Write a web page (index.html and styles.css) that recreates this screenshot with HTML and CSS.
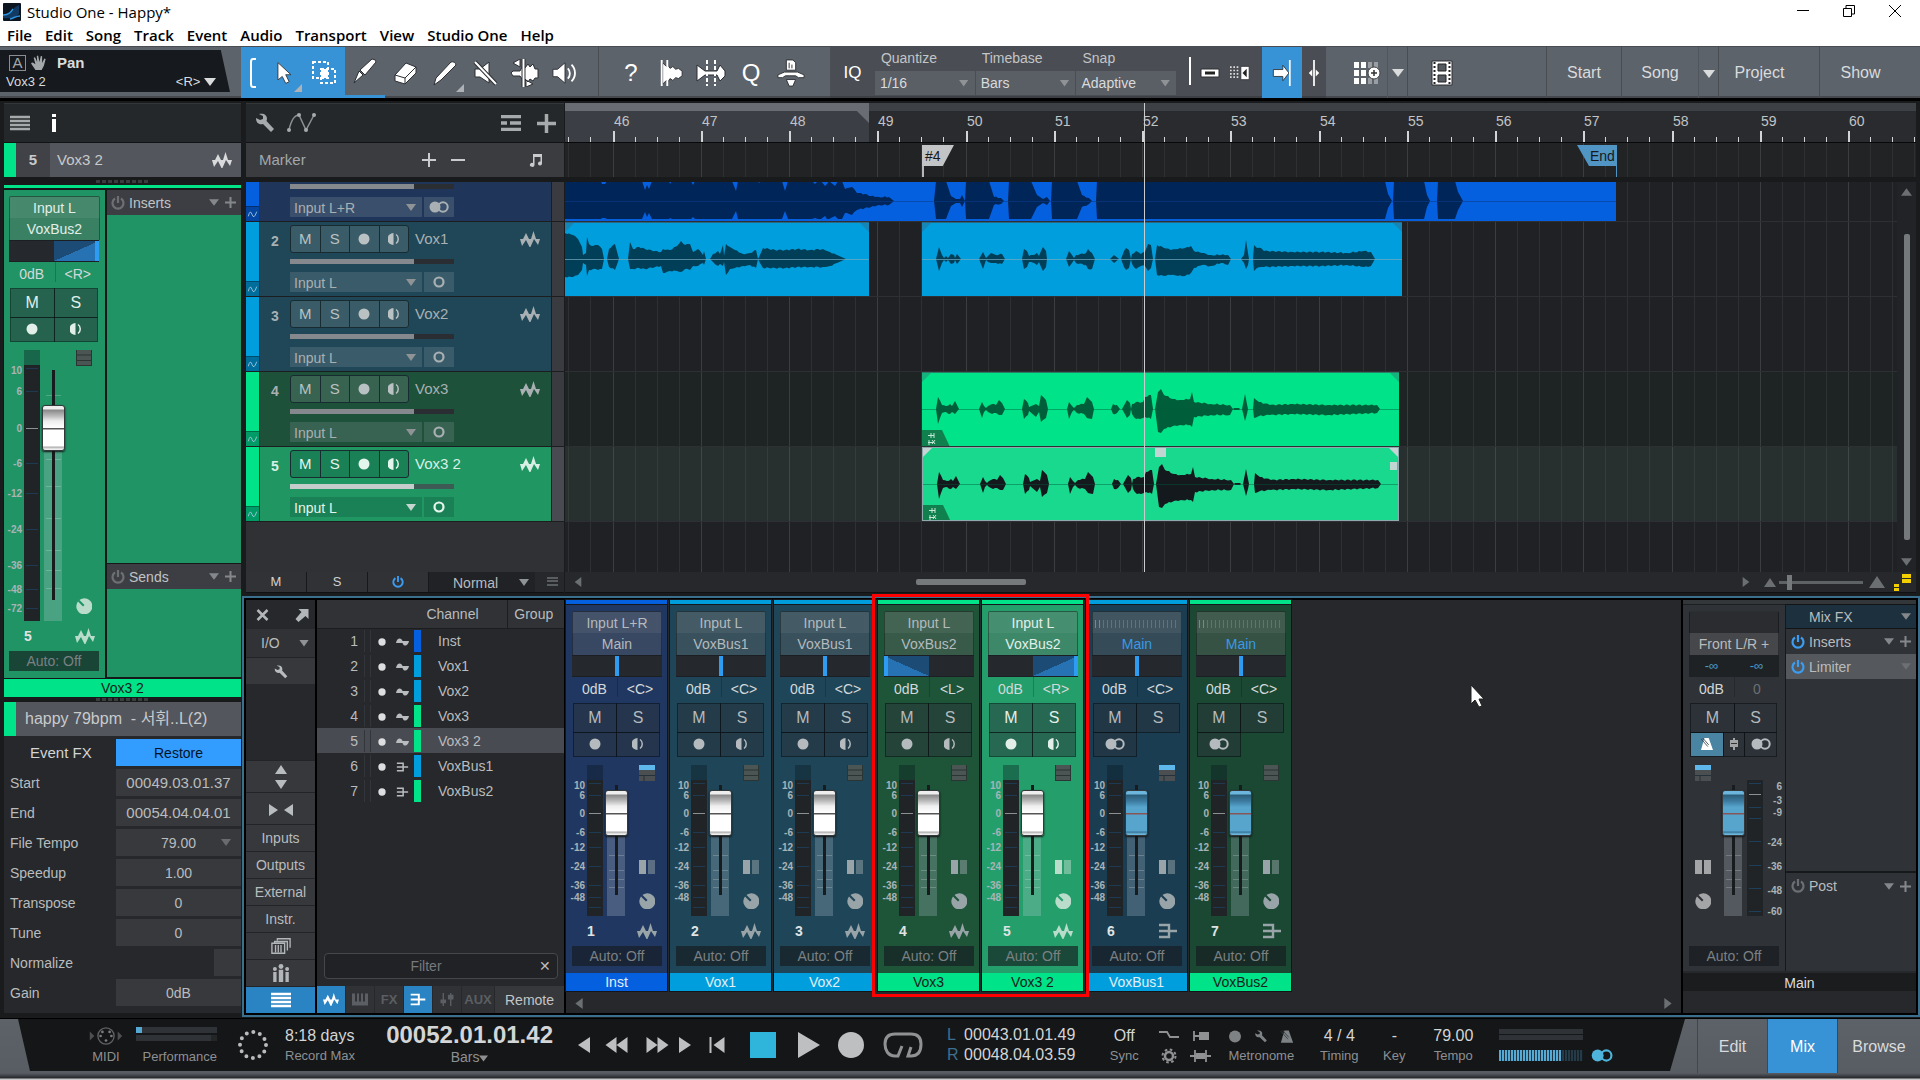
FILE: index.html
```html
<!DOCTYPE html>
<html lang="en">

<head>
    <meta charset="UTF-8">
    <meta name="viewport" content="width=device-width, initial-scale=1.0">
    <title>Studio One - Happy*</title>
    <link rel="stylesheet" href="styles.css">
</head>

<body>
    <!-- icon sprite -->
    <svg class="sprite" aria-hidden="true">
        <symbol id="wave" viewBox="0 0 20 16"><path d="M0 8h3l3-6 3 6h2l2.500-8 2.500 8h4l-2 6-4-6-4 9-4-8-4 6z" fill="currentColor"/></symbol>
        <symbol id="bus" viewBox="0 0 18 16"><path d="M0 2h10v12H0M0 8h18" fill="none" stroke="currentColor" stroke-width="2.400"/></symbol>
        <symbol id="sine" viewBox="0 0 14 8"><path d="M0 5C1-1 6-1 7 3h7c-1 6-6 6-7 2z" fill="currentColor"/></symbol>
        <symbol id="wrench" viewBox="0 0 20 20"><path d="M1 5l4 2 3-1v-3L4 1c5-1 8 1 8 5l-.5 2L19 16l-3 3-8-8C4 12 1 10 1 5z" fill="currentColor"/></symbol>
        <symbol id="rec" viewBox="0 0 12 12"><circle cx="6" cy="6" r="5.500" fill="currentColor"/></symbol>
        <symbol id="monitor" viewBox="0 0 12 12"><path d="M5.500 0v12a6 6 0 0 1 0-12z" fill="currentColor"/><path d="M8 1.500c3 2 3 7 0 9" fill="none" stroke="currentColor" stroke-width="1.500"/></symbol>
        <symbol id="stereo" viewBox="0 0 20 12"><circle cx="6" cy="6" r="5.500" fill="currentColor"/><circle cx="14" cy="6" r="4.700" fill="none" stroke="currentColor" stroke-width="2"/></symbol>
        <symbol id="mono" viewBox="0 0 12 12"><circle cx="6" cy="6" r="4.500" fill="none" stroke="currentColor" stroke-width="2.200"/></symbol>
        <symbol id="power" viewBox="0 0 14 14"><path d="M4 2.500a5.500 5.500 0 1 0 6 0M7 0v7" fill="none" stroke="currentColor" stroke-width="2.200"/></symbol>
        <symbol id="plus" viewBox="0 0 12 12"><path d="M6 0v12M0 6h12" stroke="currentColor" stroke-width="2.200"/></symbol>
        <symbol id="down" viewBox="0 0 12 8"><path d="M0 0h12L6 8z" fill="currentColor"/></symbol>
        <symbol id="left" viewBox="0 0 8 12"><path d="M8 0v12L0 6z" fill="currentColor"/></symbol>
        <symbol id="right" viewBox="0 0 8 12"><path d="M0 0v12l8-6z" fill="currentColor"/></symbol>
        <symbol id="knob" viewBox="0 0 16 16"><path d="M2 3.500l5 5 1.500-1.500-5-5A8 8 0 1 1 2 3.500z" fill="currentColor"/></symbol>
        <symbol id="lines" viewBox="0 0 20 16"><path d="M0 2h20M0 6h20M0 10h20M0 14h20" stroke="currentColor" stroke-width="2.500"/></symbol>
        <symbol id="layout" viewBox="0 0 16 16"><path d="M0 0h16v16H0z" fill="#4b5553"/><path d="M0 5h16M0 10.500h16M.5 0v16M15.500 0v16M0 15.500h16" stroke="#2b3534"/></symbol>
        <symbol id="layout-on" viewBox="0 0 16 16"><path d="M0 5h16v11H0z" fill="#4b4f52"/><path d="M0 10.500h16M5 11v5" stroke="#24303b"/><path d="M0 0h16v5H0z" fill="#5fb8ec"/></symbol>
        <symbol id="pair" viewBox="0 0 16 14"><path d="M0 0h7v14H0z" fill="currentColor"/><path d="M9 0h7v14H9z" fill="currentColor" opacity=".5"/></symbol>
        <symbol id="pair-full" viewBox="0 0 16 14"><path d="M0 0h7v14H0zM9 0h7v14H9z" fill="currentColor"/></symbol>
        <symbol id="metro" viewBox="0 0 16 14"><path d="M5 0h5l5 14H1z" fill="currentColor"/><path d="M1 1l8 9M3 0l7 8" fill="none" stroke="#36424a"/></symbol>
    </svg>

    <header class="titlebar">
        <svg class="logo" viewBox="0 0 18 18"><rect width="18" height="18" rx="1" fill="#0d1520"/><path d="M0 12c6 0 9-2 11-7l5-3v9c-4 4-9 5-16 4z" fill="#123a63"/><path d="M0 12c6 0 8-3 10-6M7 16c4-1 6-3 10-3" stroke="#2c93e0" stroke-width="1.500" fill="none"/></svg>
        <h1>Studio One - Happy*</h1>
        <div class="window-buttons">
            <button aria-label="Minimize"><svg viewBox="0 0 12 12"><path d="M0 5.500h12"/></svg></button>
            <button aria-label="Restore"><svg viewBox="0 0 12 12"><path d="M.5 3.500h8v8h-8zM3 3V.5h8.500V9H9"/></svg></button>
            <button aria-label="Close"><svg viewBox="0 0 12 12"><path d="M0 0l12 12M12 0L0 12"/></svg></button>
        </div>
    </header>
    <nav class="menu">
        <a href="#">File</a><a href="#">Edit</a><a href="#">Song</a><a href="#">Track</a><a href="#">Event</a><a href="#">Audio</a><a href="#">Transport</a><a href="#">View</a><a href="#">Studio One</a><a href="#">Help</a>
    </nav>

    <div class="toolbar">
        <div class="param">
            <div class="param-top">
                <span class="auto-a">A</span>
                <svg class="hand" viewBox="0 0 18 18"><path d="M5 17L1 11l-1-2 2-.5 3 2L3 3l1.500-.5L7 8 6.500 1 8 .5 9.500 8 11 1l1.500.5L12.500 9 15 4l1.500.5L14.500 12 12 17z" fill="#a5a8ab"/></svg>
                <b>Pan</b>
            </div>
            <div class="param-low"><span>Vox3 2</span><button>&lt;R&gt; <svg><use href="#down"/></svg></button></div>
        </div>
        <div class="tools blue">
            <svg class="bracket" viewBox="0 0 6 30"><path d="M6 1H3Q1 1 1 4v22q0 3 2 3h3"/></svg>
            <button class="corner" aria-label="Arrow tool"><svg viewBox="0 0 26 30"><path d="M6 3v20l5-4 4 8 4-2-4-8h6z" class="ink"/></svg></button>
            <button aria-label="Range tool"><svg viewBox="0 0 26 26"><path d="M2 2h15v16H2zM10 9h14v14H10z" fill="none" stroke="#fff" stroke-width="2" stroke-dasharray="3 2"/><path d="M10 9h7v9h-7z" fill="#fff"/></svg></button>
        </div>
        <div class="tools">
            <button class="under" aria-label="Split tool"><svg viewBox="0 0 26 26"><path d="M2 25l5-12 4 4zM8 12L20 1q4 0 4 3L13 17z" class="ink"/></svg></button>
            <button aria-label="Eraser"><svg viewBox="0 0 26 26"><path d="M3 15L14 3l10 4v6L13 24 3 21zM3 15l10 3v6M13 18L24 7" class="ink"/></svg></button>
            <button class="corner" aria-label="Paint tool"><svg viewBox="0 0 26 26"><path d="M2 25l2-7L19 2q4-1 5 3L9 20z" class="ink"/></svg></button>
            <button aria-label="Mute tool"><svg viewBox="0 0 26 26"><path d="M3 9h5l9-7v21l-9-6H3z" class="ink"/><path d="M3 2l21 22" stroke="#2c2f33" stroke-width="4"/><path d="M3 2l21 22" stroke="#fff" stroke-width="2"/></svg></button>
            <button aria-label="Bend tool"><svg class="w28" viewBox="0 0 30 28"><path d="M1 14l2-2h7l2-4 3 1 3-4 2 3 3-3 2 5h3v9h-3l-2 3-3-2-2 3-3-3-3 0-2-3H3zM3 4l7-4v8zM16 21l7 4-7 3z" class="ink"/><path d="M13.500 0v28" stroke="#2c2f33" stroke-width="4"/><path d="M13.500 0v28" stroke="#fff" stroke-width="2"/></svg></button>
            <button aria-label="Listen tool"><svg viewBox="0 0 28 26"><path d="M1 9h5l8-7v22l-8-7H1z" class="ink"/><path d="M17 8c3 3 3 8 0 11M21 4c5 5 5 13 0 18" fill="none" stroke="#fff" stroke-width="2"/></svg></button>
        </div>
        <div class="tools second">
            <button class="glyph">?</button>
            <button aria-label="Strip silence"><svg viewBox="0 0 26 28"><path d="M4 3l4 4 2-1 2 3 3-2 3 3 3-1 4 3v5l-4 3-3-1-3 3-3-2-2 3-2-1-4 4z" class="ink"/><path d="M3 0v28M9 0v28" stroke="#fff" stroke-width="2"/></svg></button>
            <button aria-label="Bend markers"><svg class="w28" viewBox="0 0 30 26"><path d="M1 5l8 6h12l3-6 5 6v5l-5 5-3-6H9l-8 6z" class="ink"/><path d="M11 0v26M19 0v26" stroke="#fff" stroke-width="2" stroke-dasharray="4 2"/></svg></button>
            <button class="glyph">Q</button>
            <button aria-label="Macro"><svg class="w28" viewBox="0 0 30 30"><path d="M10 1h7l3 3v8H10zM1 20v-3l7-3h14l7 3v3h-6l-3-2H9l-3 2zM10 22h10l-3 7h-4z" class="ink"/><path d="M13 4v6M16 6v4" stroke="#333"/></svg></button>
        </div>
        <div class="tools grid-tools">
            <button class="iq">IQ</button>
            <div class="field"><label for="quantize">Quantize</label><div class="pick"><select id="quantize"><option>1/16</option></select></div></div>
            <div class="field"><label for="timebase">Timebase</label><div class="pick"><select id="timebase"><option>Bars</option></select></div></div>
            <div class="field"><label for="snap">Snap</label><div class="pick"><select id="snap"><option>Adaptive</option></select></div></div>
            <svg class="snapline" viewBox="0 0 4 28"><path d="M2 0v28" stroke="#fff" stroke-width="2"/></svg>
            <button class="small" aria-label="Snap to events"><svg viewBox="0 0 20 10"><path d="M1 1h18v8H1z" class="ink"/><path d="M5 5h10" stroke="#222" stroke-width="3"/></svg></button>
            <button class="small" aria-label="Ripple edit"><svg viewBox="0 0 24 18"><path d="M1 1v16M5 1v16M9 1v16" stroke="#ddd" stroke-width="2" stroke-dasharray="2 2"/><path d="M13 1h10v16H13z" class="ink"/><path d="M20 4v10l-5-5z" fill="#222"/></svg></button>
            <button class="follow" aria-label="Autoscroll"><svg viewBox="0 0 24 30"><path d="M2 11h11V6l7 9-7 9v-5H2z" class="ink"/><path d="M21 0v30" stroke="#fff" stroke-width="2"/></svg></button>
            <button class="thin" aria-label="Cursor follows"><svg viewBox="0 0 16 30"><path d="M6 11v8l-4-4zM10 11v8l4-4z" fill="#fff"/><path d="M8 0v30" stroke="#fff" stroke-width="2"/></svg></button>
        </div>
        <div class="tools tail">
            <button class="gridbtn" aria-label="Show grid"><svg viewBox="0 0 28 24"><path d="M1 1h5v6H1zM8 1h5v6H8zM1 9h5v6H1zM8 9h5v6H8zM1 17h5v6H1zM8 17h5v6H8z" fill="#fff"/><path d="M15 1h4v6h-4zM21 1h4v6h-4zM15 17h4v6h-4zM21 17h4v6h-4z" fill="#9a9ea2"/><circle cx="21" cy="12" r="6" fill="#fff" stroke="#444"/><path d="M21 9v6M18 12h6" stroke="#333" stroke-width="1.500"/></svg></button>
            <button class="drop" aria-label="Grid options"><svg><use href="#down"/></svg></button>
            <button class="video" aria-label="Video player"><svg viewBox="0 0 22 26"><path d="M1 1h20v24H1z" class="ink"/><path d="M7 4h8v7H7zM7 15h8v7H7z" fill="#555a60" stroke="#222"/><path d="M3.500 2v22M18.500 2v22" stroke="#222" stroke-width="2" stroke-dasharray="2 2"/></svg></button>
        </div>
        <nav class="pages">
            <a href="#" class="p-start">Start</a><a href="#" class="p-song">Song</a><button class="drop" aria-label="Songs"><svg><use href="#down"/></svg></button><a href="#" class="p-project">Project</a><a href="#" class="p-show">Show</a>
        </nav>
    </div>

    <main class="workspace">
        <aside class="inspector">
            <div class="bar">
                <svg class="burger"><use href="#lines"/></svg>
                <svg class="info" viewBox="0 0 4 18"><path d="M0 0h4v3H0zM0 5h4v13H0z" fill="#fff"/></svg>
            </div>
            <div class="head green-edge">
                <b>5</b><span>Vox3 2</span><svg class="ic-wave"><use href="#wave"/></svg>
            </div>
            <div class="grip"></div>
            <div class="greenline"></div>
            <div class="inspector-channel">
                <div id="bigStrip"></div>
                <div class="racks">
                    <div class="rack-head"><svg class="ic-power"><use href="#power"/></svg><span>Inserts</span><svg class="ic-down"><use href="#down"/></svg><svg class="ic-plus"><use href="#plus"/></svg></div>
                    <div class="rack-body"></div>
                    <div class="rack-head"><svg class="ic-power"><use href="#power"/></svg><span>Sends</span><svg class="ic-down"><use href="#down"/></svg><svg class="ic-plus"><use href="#plus"/></svg></div>
                    <div class="rack-body sends"></div>
                </div>
            </div>
            <div class="strip-name green-name">Vox3 2</div>
            <div class="grip low"></div>
            <div class="head event green-edge"><span>happy 79bpm &nbsp;- 서휘..L(2)</span></div>
            <form class="event-form">
                <span class="fx">Event FX</span><button type="button" class="restore">Restore</button>
                <label for="ev-start">Start</label><input id="ev-start" class="wide" value="00049.03.01.37">
                <label for="ev-end">End</label><input id="ev-end" class="wide" value="00054.04.04.01">
                <label for="ev-tempo">File Tempo</label><div class="pick centered"><select id="ev-tempo"><option>79.00</option></select></div>
                <label for="ev-speed">Speedup</label><input id="ev-speed" value="1.00">
                <label for="ev-trans">Transpose</label><input id="ev-trans" value="0">
                <label for="ev-tune">Tune</label><input id="ev-tune" value="0">
                <label for="ev-norm">Normalize</label><input id="ev-norm" type="checkbox">
                <label for="ev-gain">Gain</label><input id="ev-gain" value="0dB">
            </form>
        </aside>

        <div class="right">
            <section class="arrange">
                <div class="tracklist">
                    <div class="bar">
                        <svg class="ic20"><use href="#wrench"/></svg>
                        <svg class="curve" viewBox="0 0 30 20"><path d="M2 17C4 8 7 2 12 2l7 15 8-15" fill="none" stroke="#8d9092" stroke-width="1.500"/><g fill="#a7aaac"><circle cx="2" cy="17" r="2"/><circle cx="12" cy="2" r="2"/><circle cx="19" cy="17" r="2"/><circle cx="27" cy="2" r="2"/></g></svg>
                        <svg class="listicon" viewBox="0 0 20 16"><path d="M0 1.500h20M0 8h6M9 8h11M0 14.500h20" stroke="#a7aaac" stroke-width="3.500"/></svg>
                        <svg class="bigplus"><use href="#plus"/></svg>
                    </div>
                    <div class="marker-head">
                        <span>Marker</span>
                        <button aria-label="Add marker"><svg viewBox="0 0 14 14"><path d="M7 0v14M0 7h14" stroke="#c9cbcd" stroke-width="2"/></svg></button>
                        <button aria-label="Remove marker"><svg viewBox="0 0 14 14"><path d="M0 7h14" stroke="#c9cbcd" stroke-width="2"/></svg></button>
                        <svg class="note" viewBox="0 0 14 14"><path d="M4 1h9v9.500a2 2 0 1 1-1.500-2V4h-6v8a2.300 2 0 1 1-1.500-2z" fill="#c9cbcd"/></svg>
                    </div>
                    <div id="tracks" class="tracks"></div>
                    <div class="track-foot">
                        <button>M</button><button>S</button><button class="on" aria-label="Power"><svg class="ic-power"><use href="#power"/></svg></button>
                        <div class="pick"><select aria-label="Track height"><option>Normal</option></select></div>
                        <svg class="footlist" viewBox="0 0 11 10"><path d="M0 1h11M0 4h11M0 8h11" stroke="#6c6f72" stroke-width="1.600"/></svg>
                    </div>
                </div>
                <div class="timeline">
                    <div id="ruler" class="ruler"></div>
                    <div id="markers" class="markers"></div>
                    <div class="lanes-wrap">
                        <svg id="grid" class="grid"></svg>
                        <div id="lanes" class="lanes"></div>
                        <div class="vscroll"><svg viewBox="0 0 12 8"><path d="M0 8h12L6 0z" fill="#6c6f72"/></svg><i></i><svg><use href="#down"/></svg></div>
                    </div>
                    <div class="hscroll">
                        <svg class="arr"><use href="#left"/></svg>
                        <i class="thumb"></i>
                        <svg class="arr"><use href="#right"/></svg>
                        <svg class="mt-small" viewBox="0 0 12 9"><path d="M0 9h12L6 0z" fill="#6c6f72"/></svg>
                        <input type="range" class="zoom" aria-label="Horizontal zoom" value="10">
                        <svg class="mt-big" viewBox="0 0 16 12"><path d="M0 12h16L8 0z" fill="#6c6f72"/></svg>
                        <svg class="yellow" viewBox="0 0 17 17"><path d="M8 0h9v4H8zM8 5h9v4H8zM0 10h5v3H0zM0 14h5v3H0z" fill="#f2cf00"/></svg>
                    </div>
                    <div class="playhead"></div>
                </div>
            </section>

            <section class="mixer">
                <div class="console-nav">
                    <div class="nav-top"><svg viewBox="0 0 14 14"><path d="M2 2l10 10M12 2L2 12" stroke="#b3b6b8" stroke-width="2.500"/></svg><svg viewBox="0 0 14 14"><path d="M3 1h10v10l-3-3-7 6-3-3 6-7z" fill="#b3b6b8"/></svg></div>
                    <div class="pick io"><select aria-label="I/O"><option>I/O</option></select></div>
                    <button class="cfg" aria-label="Console options"><svg><use href="#wrench"/></svg></button>
                    <div class="void"></div>
                    <button class="tall" aria-label="Expand"><svg class="updown" viewBox="0 0 12 24"><path d="M0 9h12L6 0zM0 15h12l-6 9z" fill="#b9bcbe"/></svg></button>
                    <button class="tall" aria-label="Narrow"><svg class="flat" viewBox="0 0 24 12"><path d="M0 0v12l9-6zM24 0v12l-9-6z" fill="#b9bcbe"/></svg></button>
                    <button>Inputs</button><button>Outputs</button><button>External</button><button>Instr.</button>
                    <button aria-label="Banks"><svg viewBox="0 0 22 18"><path d="M1 6h14v11H1zM4 6V4h14v10M7 3V1h14v10M5 8v8M8 8v8M11 8v8" fill="none" stroke="#b3b6b8" stroke-width="1.500"/></svg></button>
                    <button aria-label="Groups"><svg viewBox="0 0 18 16"><path d="M2 7h3v9H2zM7 5h4v11H7zM13 7h3v9h-3z" fill="#b3b6b8"/><circle cx="3.500" cy="4.500" r="1.800" fill="#b3b6b8"/><circle cx="9" cy="2.200" r="2.200" fill="#b3b6b8"/><circle cx="14.500" cy="4.500" r="1.800" fill="#b3b6b8"/></svg></button>
                    <button class="lit" aria-label="Channel list"><svg class="white"><use href="#lines"/></svg></button>
                </div>
                <div class="channel-list">
                    <table>
                        <thead><tr><th colspan="6">Channel</th><th>Group</th></tr></thead>
                        <tbody id="channelRows"></tbody>
                    </table>
                    <div class="filter"><input type="text" placeholder="Filter" aria-label="Filter"><button aria-label="Clear">✕</button></div>
                    <div class="types">
                        <button class="lit" aria-label="Audio"><svg class="ic-wave"><use href="#wave"/></svg></button>
                        <button aria-label="Instruments"><svg viewBox="0 0 16 12"><path d="M0 0h3v8h2V0h2v8h2V0h2v8h2V0h3v12H0z" fill="#5b5e62"/></svg></button>
                        <button>FX</button>
                        <button class="lit" aria-label="Busses"><svg class="ic-bus"><use href="#bus"/></svg></button>
                        <button aria-label="VCA"><svg viewBox="0 0 16 14"><path d="M4 0v14M12 0v14" stroke="#5b5e62" stroke-width="1.500"/><path d="M1 7h6v4H1zM9 2h6v5H9z" fill="#5b5e62"/></svg></button>
                        <button>AUX</button>
                        <button class="remote">Remote</button>
                    </div>
                </div>
                <div class="strips-wrap">
                    <div id="strips" class="strips"></div>
                    <div class="strips-scroll"><svg><use href="#left"/></svg><svg><use href="#right"/></svg></div>
                    <svg class="pointer" viewBox="0 0 14 24"><path d="M1 1v19l4-4 4 7 3-1-3-7h5z" fill="#fff" stroke="#222"/></svg>
                </div>
                <div class="main-out">
                    <div class="main-cols">
                        <div id="mainStrip"></div>
                        <div class="main-fx">
                            <div class="mixfx"><span>Mix FX</span><svg class="ic-down"><use href="#down"/></svg></div>
                            <div class="fx-row"><svg class="ic-power on"><use href="#power"/></svg><span>Inserts</span><svg class="ic-down"><use href="#down"/></svg><svg class="ic-plus"><use href="#plus"/></svg></div>
                            <div class="fx-row limiter"><svg class="ic-power on"><use href="#power"/></svg><span>Limiter</span><svg class="ic-down"><use href="#down"/></svg></div>
                            <div class="fx-space"></div>
                            <div class="fx-row post"><svg class="ic-power"><use href="#power"/></svg><span>Post</span><svg class="ic-down"><use href="#down"/></svg><svg class="ic-plus"><use href="#plus"/></svg></div>
                        </div>
                    </div>
                    <div class="main-name">Main</div>
                    <div class="main-foot"></div>
                </div>
            </section>
        </div>
    </main>

    <footer class="transport">
        <div class="display">
            <div class="stack midi">
                <svg viewBox="0 0 36 20"><path d="M0 5v10l5-5zM31 5v10l5-5z" fill="#4d5053"/><circle cx="18" cy="10" r="9" fill="none" stroke="#5f6265" stroke-width="1.500"/><g fill="#7a7d80"><circle cx="12" cy="10" r="1.500"/><circle cx="14" cy="5.500" r="1.500"/><circle cx="22" cy="5.500" r="1.500"/><circle cx="24" cy="10" r="1.500"/><circle cx="18" cy="15" r="1.500"/></g></svg>
                <small>MIDI</small>
            </div>
            <div class="stack perf"><div class="meters"><i class="cpu"></i><i></i></div><small>Performance</small></div>
            <svg class="ring" viewBox="0 0 30 30"><circle cx="15" cy="15" r="13" fill="none" stroke="#b9bbbd" stroke-width="4" stroke-linecap="round" stroke-dasharray="0 6.800"/></svg>
            <div class="stack recmax"><span>8:18 days</span><small>Record Max</small></div>
            <div class="stack clock"><strong>00052.01.01.42</strong><button>Bars<svg><use href="#down"/></svg></button></div>
            <div class="buttons">
                <button class="b-prev" aria-label="Previous"><svg viewBox="0 0 12 16"><path d="M12 0v16L0 8z"/></svg></button>
                <button class="b-rew" aria-label="Rewind"><svg viewBox="0 0 22 16"><path d="M11 0v16L0 8zM22 0v16L11 8z"/></svg></button>
                <button class="b-ff" aria-label="Forward"><svg viewBox="0 0 22 16"><path d="M0 0v16l11-8zM11 0v16l11-8z"/></svg></button>
                <button class="b-next" aria-label="Next"><svg viewBox="0 0 12 16"><path d="M0 0v16l12-8z"/></svg></button>
                <button class="b-zero" aria-label="Return to zero"><svg viewBox="0 0 15 16"><path d="M0 0h2v16H0zM15 0v16L4 8z"/></svg></button>
                <button class="b-stop" aria-label="Stop"><svg viewBox="0 0 26 26"><path d="M0 0h26v26H0z" fill="#2fb4dc"/></svg></button>
                <button class="b-play" aria-label="Play"><svg viewBox="0 0 22 26"><path d="M0 0v26l22-13z"/></svg></button>
                <button class="b-rec" aria-label="Record"><svg viewBox="0 0 26 26"><circle cx="13" cy="13" r="13"/></svg></button>
                <button class="b-loop" aria-label="Loop"><svg viewBox="0 0 40 26"><path d="M12 24C5 24 2 18 2 12 2 5 6 2 12 2h16c6 0 10 3 10 10s-3 12-10 12M12 24h3l4-10M28 24h-3l3-9" fill="none" stroke="#8f9193" stroke-width="3"/></svg></button>
            </div>
            <div class="locators">
                <b>L</b><span>00043.01.01.49</span><b>R</b><span>00048.04.03.59</span>
            </div>
            <div class="stack sync"><span>Off</span><small>Sync</small></div>
            <div class="stack pre">
                <svg viewBox="0 0 52 16"><path d="M0 4h8l3 5h9M35 3v10M35 8h6" fill="none" stroke="#8f9193" stroke-width="1.800"/><path d="M40 4h10v8H40z" fill="#8f9193"/></svg>
                <svg viewBox="0 0 52 16"><circle cx="10" cy="8" r="4" fill="none" stroke="#8f9193" stroke-width="2.500"/><circle cx="10" cy="8" r="6.500" fill="none" stroke="#8f9193" stroke-width="2" stroke-dasharray="2.600 2.500"/><path d="M36 2v12M47 2v12M31 8h21" stroke="#8f9193" stroke-width="1.800"/><path d="M37 5h9v6h-9z" fill="#8f9193"/></svg>
            </div>
            <div class="stack metronome"><div class="row3"><svg><use href="#rec"/></svg><svg><use href="#wrench"/></svg><svg><use href="#metro"/></svg></div><small>Metronome</small></div>
            <div class="stack timing"><span>4 / 4</span><small>Timing</small></div>
            <div class="stack key"><span>-</span><small>Key</small></div>
            <div class="stack tempo"><span>79.00</span><small>Tempo</small></div>
            <div class="outs"><i class="dark"></i><i class="dark"></i><div class="level"><i></i><svg><use href="#stereo"/></svg></div></div>
        </div>
        <nav class="views"><a href="#">Edit</a><a href="#" class="lit">Mix</a><a href="#">Browse</a></nav>
    </footer>
    <div class="edge"></div>
    <script src="script.js"></script>
</body>

</html>
```

FILE: styles.css
```css
* {
    box-sizing: border-box;
}

body {
    margin: 0;
    min-height: 100vh;
    display: flex;
    flex-direction: column;
    background-color: #1a1b1d;
    color: #b9bcbe;
    font-family: "Liberation Sans", "Noto Sans CJK KR", sans-serif;
    font-size: 14px;
    line-height: 16px;
    overflow: hidden;
}

button,
input,
select {
    font: inherit;
    color: inherit;
    background: none;
    border: 0;
    padding: 0;
    margin: 0;
    border-radius: 0;
}

select,
input[type=range],
input[type=checkbox] {
    appearance: none;
    -webkit-appearance: none;
}

a {
    color: inherit;
    text-decoration: none;
}

svg {
    flex: none;
}

.sprite {
    position: absolute;
    width: 0;
    height: 0;
}

/* title and menu */
.titlebar,
.menu {
    background-color: white;
    color: black;
    display: flex;
    align-items: center;
    font-family: "Open Sans", "Noto Sans", sans-serif;
}

.titlebar {
    height: 24px;
    padding-left: 3px;
}

.logo {
    width: 18px;
    height: 18px;
    margin-right: 6px;
}

.titlebar h1 {
    margin: 0;
    font-size: 15px;
    font-weight: 500;
}

.window-buttons {
    margin-left: auto;
    display: flex;
}

.window-buttons button {
    width: 46px;
    padding-right: 4px;
}

.window-buttons svg {
    width: 12px;
    height: 12px;
    stroke: black;
    fill: none;
}

.menu {
    height: 22px;
    padding-left: 7px;
    gap: 13px;
    font-size: 15px;
    font-weight: 600;
}

/* toolbar */
.toolbar {
    height: 52px;
    display: flex;
    background: linear-gradient(#5d636b 49px, #45494e 49px);
    border-top: 1px solid #494d52;
    color: #d9dbdc;
}

.param {
    width: 230px;
    height: 42px;
    margin: 3px 11px 0 0;
    padding: 5px 14px 0 6px;
    background-color: #16191d;
    clip-path: polygon(0 0, 96% 0, 100% 100%, 0 100%);
}

.param-top {
    display: flex;
    align-items: center;
    gap: 5px;
    padding-left: 3px;
    font-size: 15px;
}

.param-top b {
    margin-left: 5px;
}

.auto-a {
    border: 1px solid #8b8e91;
    width: 17px;
    height: 16px;
    text-align: center;
    line-height: 14px;
    color: #a5a8ab;
}

.hand {
    width: 16px;
    height: 16px;
}

.param-low {
    display: flex;
    justify-content: space-between;
    padding-top: 3px;
    font-size: 13px;
}

.param-low svg {
    width: 12px;
    height: 8px;
}

.tools {
    display: flex;
    align-items: stretch;
}

.tools button {
    width: 40px;
    display: flex;
    align-items: center;
    justify-content: center;
    position: relative;
}

.tools button svg {
    width: 26px;
    height: 26px;
}

.tools button .w28 {
    width: 30px;
    height: 28px;
}

.ink {
    fill: white;
    stroke: #2c2f33;
    stroke-width: 1px;
}

.tools.blue,
.tools .follow {
    background-color: #3793d5;
}

.tools.blue {
    width: 104px;
    padding-left: 9px;
    gap: 2px;
    align-items: center;
}

.tools.blue button {
    height: 51px;
    width: 38px;
}

.bracket {
    width: 6px;
    height: 30px;
    margin-right: 7px;
    fill: none;
    stroke: white;
    stroke-width: 2px;
}

.corner::after {
    content: "";
    position: absolute;
    right: 1px;
    bottom: 6px;
    width: 8px;
    height: 8px;
    background-color: #aeb2b6;
    clip-path: polygon(100% 0, 100% 100%, 0 100%);
}

.tools .under {
    border-bottom: 3px solid #3793d5;
}

.tools.second {
    width: 245px;
    padding-left: 26px;
}

.tools.second::before {
    content: "";
    border-left: 1px solid #494d52;
    margin: 0 12px 0 -13px;
}

.tools .glyph {
    font-size: 24px;
    color: white;
}

.grid-tools {
    width: 496px;
    background: linear-gradient(#4a4d53 49px, #3c3f43 49px);
}

.tools .iq {
    width: 45px;
    font-size: 17px;
    color: white;
}

.field {
    width: 101px;
    padding-top: 3px;
}

.field label {
    display: block;
    padding: 0 0 5px 6px;
    color: #c3c5c7;
}

.field .pick {
    height: 24px;
    margin-right: 1px;
    background-color: #5a5e65;
    padding-left: 5px;
}

/* select with its arrow laid over the right end */
.pick {
    display: grid;
    align-items: center;
}

.pick select {
    grid-area: 1 / 1;
    width: 100%;
    height: 100%;
}

.pick::after {
    content: "";
    grid-area: 1 / 1;
    justify-self: end;
    margin-right: 6px;
    width: 10px;
    height: 7px;
    background-color: #8f9396;
    clip-path: polygon(0 0, 100% 0, 50% 100%);
    pointer-events: none;
}

.snapline {
    width: 4px;
    height: 28px;
    margin: 10px 3px 0 11px;
}

.grid-tools button.small {
    width: 30px;
}

.grid-tools .small svg {
    width: 20px;
    height: 18px;
}

.grid-tools .follow {
    margin-left: 7px;
}

.grid-tools .thin {
    width: 24px;
}

.tools.tail .gridbtn {
    width: 61px;
    padding-left: 20px;
}

.toolbar .drop {
    width: 20px;
    border-left: 1px solid #51565d;
}

.toolbar .drop svg {
    width: 12px;
    height: 8px;
}

.tools.tail .video {
    width: 139px;
    padding-right: 71px;
    border-left: 1px solid #494d52;
}

.tools.tail .gridbtn svg {
    width: 28px;
}

.pages {
    margin-left: auto;
    display: flex;
    font-size: 16px;
}

.pages a {
    display: flex;
    align-items: center;
    justify-content: center;
    border-left: 1px solid #494d52;
}

.p-start {
    width: 75px;
}

.p-song {
    width: 77px;
}

.p-project {
    width: 101px;
    padding-right: 19px;
}

.p-show {
    width: 101px;
    padding-right: 19px;
}

/* workspace */
.workspace {
    flex: 1;
    display: flex;
    gap: 1px;
    padding: 0 0 0 4px;
    border-top: 3px solid black;
    margin-bottom: 1px;
}

.workspace > * {
    margin-top: 2px;
}

.inspector {
    width: 237px;
    flex: none;
    background-color: #26282b;
    display: flex;
    flex-direction: column;
    margin-bottom: 4px;
}

.bar {
    height: 40px;
    border-top: 1px solid #34373a;
    border-bottom: 1px solid #121314;
    background-color: #25282a;
    display: flex;
    align-items: center;
    padding: 0 8px 0 9px;
    color: #a7aaac;
}

.burger {
    width: 20px;
    height: 16px;
    margin: 0 22px 0 -3px;
}

.info {
    width: 4px;
    height: 18px;
}

.ic20 {
    width: 20px;
    height: 20px;
    color: #a7aaac;
}

.curve {
    width: 30px;
    height: 20px;
    margin-left: 12px;
}

.listicon {
    width: 20px;
    height: 16px;
    margin-left: auto;
}

.bigplus {
    width: 19px;
    height: 19px;
    margin-left: 16px;
    color: #a7aaac;
}

.head {
    height: 34px;
    display: flex;
    align-items: center;
    background-color: #53565c;
    font-size: 15px;
    color: #c8cacc;
    padding-right: 9px;
}

.green-edge {
    border-left: 12px solid #00e388;
}

.head b {
    width: 34px;
    height: 34px;
    line-height: 34px;
    text-align: center;
    background-color: #404247;
    margin-right: 7px;
}

.head .ic-wave {
    margin-left: auto;
    color: #d8dadb;
}

.ic-wave {
    width: 20px;
    height: 16px;
}

.ic-bus {
    width: 18px;
    height: 16px;
}

.ic-power {
    width: 14px;
    height: 14px;
}

.ic-down {
    width: 10px;
    height: 7px;
    color: #85888b;
}

.ic-plus {
    width: 11px;
    height: 11px;
    color: #85888b;
}

.grip {
    height: 8px;
    background: repeating-linear-gradient(90deg, #3a3c3e 0 4px, transparent 4px 6px) center / 54px 3px no-repeat #18191a;
}

.grip.low {
    height: 5px;
}

.greenline {
    height: 3px;
    background-color: #00e388;
}

.inspector-channel {
    display: flex;
    flex: 1;
    background-color: #16181a;
    padding: 2px 0 1px;
    gap: 2px;
}

.racks {
    flex: 1;
    display: flex;
    flex-direction: column;
}

.rack-head {
    height: 25px;
    background-color: #3c3e43;
    display: flex;
    align-items: center;
    padding: 0 5px 0 4px;
}

.rack-head span {
    margin: 0 auto 0 4px;
    color: #c1c3c5;
}

.rack-head .ic-plus {
    margin-left: 6px;
}

.rack-head .ic-power,
.post .ic-power {
    color: #6d7073;
}

.rack-body {
    flex: 1;
    background-color: #219465;
    border-bottom: 1px solid #16181a;
}

.rack-body.sends {
    flex: none;
    height: 89px;
}

.strip-name {
    height: 18px;
    line-height: 18px;
    text-align: center;
    color: #e3eef5;
}

.green-name {
    background-color: #00e388;
    color: #12211b;
}

.head.event {
    font-size: 16px;
    padding-left: 9px;
}

.event-form {
    display: grid;
    grid-template-columns: 1fr 125px;
    grid-auto-rows: 27px;
    row-gap: 3px;
    align-items: center;
    padding-top: 3px;
    padding-bottom: 7px;
}

.event-form label {
    padding-left: 6px;
}

.event-form .fx {
    padding-left: 26px;
    font-size: 15px;
    color: #d2d4d5;
}

.restore {
    background-color: #339cff;
    color: #08131f;
    height: 27px;
}

.event-form input,
.centered {
    width: 125px;
    height: 27px;
    background-color: #38393d;
    text-align: center;
}

.event-form .wide {
    font-size: 15px;
}

.event-form input[type=checkbox] {
    width: 27px;
    justify-self: end;
}

.centered select {
    text-align-last: center;
    text-align: center;
}

.centered::after {
    margin-right: 10px;
    background-color: #696c6f;
}

/* arrangement */
.right {
    flex: 1;
    min-width: 0;
    display: flex;
    flex-direction: column;
}

.arrange {
    flex: 1;
    display: flex;
    gap: 1px;
    margin: 0 4px 3px;
}

.tracklist {
    width: 318px;
    flex: none;
    background-color: #2f3135;
    display: flex;
    flex-direction: column;
}

.marker-head {
    height: 34px;
    background-color: #3a3c40;
    display: flex;
    align-items: center;
    padding-left: 13px;
    font-size: 15px;
}

.marker-head span {
    width: 163px;
    color: #a4a7a9;
}

.marker-head button {
    width: 29px;
    height: 14px;
    text-align: left;
}

.marker-head button svg,
.note {
    width: 14px;
    height: 14px;
    display: block;
}

.note {
    margin: 0 21px 0 auto;
}

.tracks {
    border-top: 5px solid #191a1b;
    flex: 1;
}

.track {
    height: 75px;
    display: flex;
    border-bottom: 1px solid #1b1d1f;
    color: #a9b0b3;
}

.track.cut {
    height: 40px;
    overflow: hidden;
    align-items: flex-end;
}

.track.cut > * {
    flex-shrink: 0;
    height: 74px;
}

.track-color {
    width: 13px;
    display: flex;
    align-items: flex-end;
}

.track-color svg {
    width: 13px;
    height: 15px;
    background-color: rgba(0, 20, 40, .35);
    border-top: 1px solid rgba(0, 0, 0, .3);
}

.track-body {
    flex: 1;
    margin-left: 1px;
    display: flex;
    padding-top: 3px;
}

.track-num {
    width: 30px;
    text-align: center;
    padding-top: 8px;
}

.track-main {
    flex: 1;
}

.track-line {
    display: flex;
    align-items: center;
    height: 28px;
    font-size: 15px;
}

.track-line .ic-wave {
    margin: 0 11px 0 auto;
}

.track-ms {
    width: 119px;
    height: 28px;
    display: flex;
    border: 1px solid #182b31;
    border-radius: 3px;
    background-color: rgba(140, 155, 155, .25);
    margin-right: 6px;
    color: #bac1c3;
}

.track-ms button {
    flex: 1;
    display: flex;
    align-items: center;
    justify-content: center;
}

.track-ms button + button {
    border-left: 1px solid #182b31;
}

.track-ms svg {
    width: 12px;
    height: 12px;
}

.track-vol {
    margin: 6px 0 8px;
    width: 164px;
    height: 5px;
    display: block;
    background: linear-gradient(90deg, #85888c 124px, #2a2e33 124px);
}

.track-vol::-webkit-slider-thumb {
    -webkit-appearance: none;
    width: 1px;
    height: 5px;
}

.track-in {
    display: flex;
    gap: 2px;
    height: 20px;
}

.track-in .pick {
    width: 132px;
    padding: 1px 0 0 4px;
    background-color: rgba(140, 155, 165, .25);
}

.track-in button {
    width: 30px;
    display: flex;
    align-items: center;
    justify-content: center;
    background-color: rgba(140, 155, 165, .25);
}

.track-in svg {
    width: 20px;
    height: 12px;
}

.track-meter {
    width: 13px;
    background-color: #393b40;
    border-left: 1px solid #1b1d1f;
}

.track.sel {
    color: #d9efe5;
}

.track.sel .track-ms,
.track.sel .track-in .pick,
.track.sel .track-in button {
    background-color: #1a8055;
    color: #e4f5ed;
}

.track.sel .track-vol {
    background: linear-gradient(90deg, #c5cccb 124px, #3d5a54 124px);
}

.track.sel .pick::after {
    background-color: #c5d5cf;
}

.track.sel .track-meter {
    background-color: #484c52;
}

.track-foot {
    height: 21px;
    display: flex;
    background-color: #26282b;
    border-bottom: 1px solid #101112;
}

.track-foot button {
    width: 61px;
    border-right: 1px solid #17181a;
    background-color: #303236;
    font-size: 13px;
    display: flex;
    align-items: center;
    justify-content: center;
    color: #d0d2d3;
}

.track-foot .on,
.on {
    color: #3b9cf0;
}

.track-foot .ic-power {
    width: 12px;
    height: 12px;
}

.track-foot .pick {
    width: 106px;
    padding: 1px 0 0 24px;
    background-color: #202225;
}

.footlist {
    width: 11px;
    height: 10px;
    margin: 5px auto 0 12px;
}

.timeline {
    flex: 1;
    min-width: 0;
    display: flex;
    flex-direction: column;
    position: relative;
    overflow: hidden;
}

.ruler {
    height: 40px;
    background: linear-gradient(90deg, rgba(85, 92, 102, .4) 304px, transparent 304px), linear-gradient(#3d4045 8px, #2a2b2e 8px);
    border-bottom: 1px solid #08090a;
    position: relative;
}

.ruler .loop {
    position: absolute;
    left: 0;
    width: 304px;
    height: 20px;
    background: #696d73;
    clip-path: polygon(0 0, 100% 0, 100% 100%, 96% 8px, 0 8px);
}

.ruler span {
    position: absolute;
    top: 10px;
    color: #c1c3c5;
}

.ruler svg {
    position: absolute;
    width: 100%;
    height: 100%;
}

.markers {
    height: 34px;
    background-color: #212325;
    position: relative;
}

.markers svg {
    width: 100%;
    height: 34px;
}

.flag {
    position: absolute;
    top: 2px;
    height: 21px;
    line-height: 23px;
    font-size: 14px;
    color: #17191b;
}

.flag.four {
    width: 32px;
    padding-left: 3px;
    background-color: #c3c4c5;
    clip-path: polygon(0 0, 100% 0, 65% 100%, 0 100%);
}

.flag.end {
    width: 40px;
    padding-left: 13px;
    background-color: #5095c4;
    clip-path: polygon(0 0, 100% 0, 100% 100%, 30% 100%);
}

.pole {
    position: absolute;
    top: 2px;
    bottom: 0;
    width: 2px;
    background-color: #b5b7b9;
}

.pole.blue {
    width: 1px;
    background-color: #5095c4;
}

.lanes-wrap {
    flex: 1;
    border-top: 5px solid #191a1b;
    background-color: #1f2124;
    position: relative;
    display: flex;
}

.grid {
    position: absolute;
    width: 100%;
    height: 100%;
}

.lanes {
    flex: 1;
}

.lane {
    height: 75px;
    position: relative;
    border-bottom: 1px solid #2d2f32;
}

.lane.cut {
    height: 40px;
}

.lane.tint {
    background-color: rgba(20, 80, 40, .08);
}

.lane.lit {
    background-color: rgba(90, 140, 110, .14);
}

.clip {
    position: absolute;
    top: 0;
    bottom: 0;
    overflow: hidden;
    border-top: 1px solid rgba(60, 80, 90, .7);
}

.clip svg {
    display: block;
    height: 74px;
}

.clip.first {
    border-top: 0;
}

.clip.picked {
    border: 1px solid #8fa9ad;
}

.clip::before,
.clip::after {
    content: "";
    position: absolute;
    top: 0;
    width: 9px;
    height: 9px;
    background-color: rgba(60, 90, 110, .35);
}

.clip::before {
    left: 0;
    clip-path: polygon(0 0, 100% 0, 0 100%);
}

.clip::after {
    right: 0;
    clip-path: polygon(0 0, 100% 0, 100% 100%);
}

.clip.first::before,
.clip.first::after {
    display: none;
}

.clip.picked::before,
.clip.picked::after {
    background-color: #c6d3d5;
}

.vscroll {
    width: 19px;
    background-color: #212326;
    display: flex;
    flex-direction: column;
    align-items: center;
    gap: 38px;
    padding: 6px 0;
    position: relative;
}

.vscroll svg {
    width: 11px;
    height: 8px;
    color: #6c6f72;
}

.vscroll i {
    flex: 1;
    width: 6px;
    margin-bottom: -20px;
    background-color: #76797c;
    border-radius: 2px;
}

.hscroll {
    height: 21px;
    background-color: #26282b;
    display: flex;
    align-items: center;
    border-bottom: 1px solid #101112;
    padding: 0 5px 0 9px;
    color: #6c6f72;
}

.hscroll .arr {
    width: 8px;
    height: 10px;
}

.thumb {
    width: 110px;
    height: 6px;
    margin: 0 auto 0 334px;
    background-color: #76797c;
    border-radius: 2px;
}

.mt-small {
    width: 12px;
    height: 9px;
    margin: 0 3px 0 14px;
}

.zoom {
    width: 84px;
    height: 16px;
    background: linear-gradient(#5f6265, #5f6265) center / 100% 3px no-repeat;
}

.zoom::-webkit-slider-thumb {
    -webkit-appearance: none;
    width: 5px;
    height: 15px;
    background-color: #76797c;
}

.mt-big {
    width: 16px;
    height: 12px;
    margin: 0 9px 0 6px;
}

.yellow {
    width: 17px;
    height: 17px;
}

.playhead {
    position: absolute;
    top: 0;
    bottom: 21px;
    left: 579px;
    width: 1px;
    background-color: #c9cbcc;
}

/* mixer */
.mixer {
    border: 2px solid #3a6f8d;
    padding: 2px;
    background-color: black;
    display: flex;
    gap: 2px;
    height: 421px;
    color: #b9bcbe;
}

.console-nav {
    width: 69px;
    background-color: #26282b;
    display: flex;
    flex-direction: column;
}

.console-nav button {
    height: 27px;
    background-color: #36383c;
    border-top: 1px solid #222427;
}

.console-nav svg {
    width: 20px;
    height: 18px;
    vertical-align: middle;
}

.nav-top {
    display: flex;
    justify-content: space-between;
    align-items: center;
    padding: 0 3px 0 9px;
    height: 29px;
}

.console-nav .nav-top svg {
    width: 15px;
    height: 14px;
    margin-right: 2px;
}

.io {
    height: 28px;
    padding-left: 15px;
    background-color: #303236;
}

.console-nav .cfg svg {
    width: 14px;
    height: 14px;
}

.void {
    flex: 1;
}

.console-nav button.tall {
    height: 32px;
}

.console-nav .updown {
    width: 12px;
    height: 24px;
}

.console-nav .tall .flat {
    width: 24px;
    height: 12px;
}

.console-nav button.lit,
.types button.lit {
    background-color: #2a84c3;
    color: white;
}

.channel-list {
    width: 247px;
    background-color: #26282b;
    display: flex;
    flex-direction: column;
}

.channel-list table {
    border-collapse: collapse;
    table-layout: fixed;
    width: 100%;
}

.channel-list th {
    height: 28px;
    font-weight: normal;
    padding: 0;
    background-color: #303236;
    border-bottom: 1px solid #1b1d1f;
}

.channel-list th:first-child {
    text-align: right;
    padding-right: 28px;
    border-right: 1px solid #1b1d1f;
}

.channel-list th:last-child {
    width: 57px;
    padding-right: 4px;
}

.channel-list td {
    height: 25px;
    padding: 0;
}

.channel-list tr.sel {
    background-color: #494b52;
}

.c-num {
    width: 47px;
    text-align: right;
}

.channel-list .c-num {
    padding-right: 6px;
}

.c-meter i {
    display: block;
    width: 7px;
    height: 22px;
    border: solid #323539;
    border-width: 0 1px;
}

.c-dot svg {
    width: 8px;
    height: 8px;
    color: #dcdedf;
    margin-left: 6px;
}

.channel-list .c-type {
    padding-left: 4px;
}

.c-type svg {
    width: 13px;
    height: 10px;
    vertical-align: middle;
}

.c-color i {
    display: block;
    width: 7px;
    height: 22px;
}

.channel-list .c-name {
    padding-left: 17px;
}

.filter {
    margin: auto 6px 7px 7px;
    height: 26px;
    display: flex;
    align-items: center;
    border: 1px solid #44474b;
    border-radius: 4px;
    background-color: #202225;
}

.filter input {
    flex: 1;
    min-width: 0;
    text-align: center;
    padding-right: 6px;
}

.filter input::placeholder {
    color: #77797c;
}

.filter button {
    width: 24px;
    font-size: 14px;
}

.types {
    display: flex;
    height: 27px;
    gap: 1px;
}

.types button {
    width: 28px;
    background-color: #303236;
    color: #5b5e62;
    font-weight: bold;
    font-size: 13px;
    display: flex;
    align-items: center;
    justify-content: center;
}

.types svg {
    width: 16px;
    height: 13px;
}

.types button:nth-child(6) {
    width: 32px;
}

.types button.remote {
    flex: 1;
    font-weight: normal;
    font-size: 14px;
    color: #c3c5c7;
    background-color: #36383c;
}

.strips-wrap {
    flex: 1;
    min-width: 0;
    position: relative;
    background-color: #26282b;
    display: flex;
    flex-direction: column;
}

.strips {
    display: flex;
    gap: 3px;
    align-items: flex-start;
}

.strips-scroll {
    margin-top: auto;
    height: 20px;
    display: flex;
    justify-content: space-between;
    align-items: center;
    padding: 0 9px;
    color: #6c6f72;
}

.strips-scroll svg {
    width: 8px;
    height: 11px;
}

.pointer {
    position: absolute;
    left: 904px;
    top: 83px;
    width: 14px;
    height: 26px;
}

.marked {
    display: flex;
    gap: 3px;
    position: relative;
}

.marked::after {
    content: "";
    position: absolute;
    inset: -6px;
    border: 3px solid red;
    pointer-events: none;
}

.strip {
    width: 101px;
    outline: 1px solid #141518;
    color: #b4babd;
}

.strip .cap {
    height: 4px;
}

.strip-body {
    border-top: 1px solid #14181c;
    padding: 6px 5px 7px 6px;
}

.strip-body.big {
    height: 100%;
    border-top: 0;
    padding-left: 5px;
}

.routing {
    height: 44px;
    display: grid;
    grid-template-rows: 1fr 1fr;
    border: 1px solid rgba(0, 0, 0, .35);
    border-bottom: 0;
    border-radius: 2px 2px 0 0;
    background: linear-gradient(rgba(120, 120, 120, .42) 50%, rgba(100, 100, 100, .38) 50%);
}

.routing .dots {
    margin: 8px 3px 6px 2px;
    background: linear-gradient(90deg, #2aa0e0 1px, transparent 1px 4px, #2aa0e0 4px 5px, transparent 5px), repeating-linear-gradient(90deg, #5d7380 0 1px, transparent 1px 4px);
}

.link {
    color: #399ae6;
}

.pan {
    display: block;
    width: 90px;
    height: 22px;
    border: solid #1b1f24;
    border-width: 1px 0;
    background: #25282c;
}

.pan::-webkit-slider-thumb {
    -webkit-appearance: none;
    width: 4px;
    height: 20px;
    background-color: #2d9cf2;
}

.pan.l {
    background: linear-gradient(to top right, #2672b3 50%, #1c4b76 50%) left / 50% 100% no-repeat #25282c;
}

.pan.r {
    background: linear-gradient(to bottom right, #1c4b76 50%, #2672b3 50%) right / 50% 100% no-repeat #25282c;
}

.gain {
    height: 27px;
    display: grid;
    grid-template-columns: 1fr 1fr;
    text-align: center;
    line-height: 24px;
    color: #d3d8da;
}

.gain span + span {
    border-left: 1px solid rgba(0, 0, 0, .2);
    height: 20px;
}

.ms {
    height: 52px;
    margin: 0 3px 0 2px;
    display: grid;
    grid-template-columns: 1fr 1fr;
    gap: 1px;
    color: #b4babd;
    font-size: 16px;
}

.ms button {
    display: flex;
    align-items: center;
    justify-content: center;
    background-color: rgba(42, 50, 58, .5);
    outline: 1px solid rgba(10, 15, 20, .6);
}

.ms svg {
    width: 12px;
    height: 12px;
}

.ms .wide {
    width: 20px;
}

.fader-box {
    margin-top: 9px;
    display: flex;
    margin-left: -5px;
}

.scale {
    width: 36px;
    overflow: visible;
    font-size: 10px;
    font-weight: bold;
    fill: #a9b3b6;
}

.fader {
    display: grid;
    width: 23px;
    margin: 20px 11px 0 2px;
}

.fader > * {
    grid-area: 1 / 1;
}

.fader input {
    writing-mode: vertical-lr;
    direction: rtl;
    width: 23px;
    height: 100%;
    background: none;
}

.fader input::-webkit-slider-thumb {
    -webkit-appearance: none;
    width: 23px;
    height: 46px;
    border: 1px solid #33383b;
    border-radius: 3px;
    background: linear-gradient(#eee 3px, #888 4px, #bbb 10px, #eee 15px, #fff 22px, #555 22px, #555 23px, #fff 24px, #fff 40px, #aaa 41px, #eee 43px);
    box-shadow: 0 1px 2px #111;
}

.fader.bus input::-webkit-slider-thumb {
    background: linear-gradient(#6cb6dd 3px, #2b5c78 4px, #3c7a9f 10px, #57a4cd 16px, #57a4cd 22px, #855 22px, #855 23px, #57a4cd 24px, #57a4cd 40px, #357091 41px, #6cb6dd 43px);
}

.side {
    display: flex;
    flex-direction: column;
    gap: 19px;
    padding-bottom: 7px;
    color: #98a4a8;
}

.side svg {
    width: 16px;
    height: 16px;
}

.side svg:first-child {
    margin-bottom: auto;
}

.side .pairic {
    height: 14px;
}

.foot {
    height: 30px;
    display: flex;
    align-items: center;
    justify-content: space-between;
    padding: 0 5px 0 15px;
    color: #98a4a8;
}

.foot b {
    color: #dfe3e4;
}

.auto {
    width: 90px;
    height: 20px;
    line-height: 20px;
    display: block;
    text-align: center;
    background-color: rgba(22, 26, 30, .65);
    color: #7b8082;
}

.strip.sel,
.strip.sel .ms {
    color: #e2efe9;
}

.strip.sel .side,
.strip.sel .foot {
    color: #b9dccb;
}

.main-out {
    width: 233px;
    background-color: #26282b;
    display: flex;
    flex-direction: column;
    border-top: 4px solid #34373a;
}

.main-cols {
    flex: 1;
    display: flex;
    gap: 1px;
    background-color: #16181a;
}

.main-strip {
    width: 102px;
    height: 100%;
    background-color: #2f3237;
    border-top: 1px solid #1c1e20;
    padding: 6px 6px 0;
}

.main-strip .routing {
    background: linear-gradient(#2a2c30 50%, #45474a 50%);
}

.infs {
    display: grid;
    grid-template-columns: 1fr 1fr;
    height: 22px;
    line-height: 22px;
    text-align: center;
    font-size: 13px;
    color: #4a9ac9;
    background-color: #1f2225;
}

.main-strip .gain span + span {
    color: #6c6f72;
}

.main-strip .ms {
    grid-template-columns: 32px 10px 9px 1fr;
}

.main-strip .m-m {
    grid-column: 1 / 3;
}

.main-strip .m-s {
    grid-column: 3 / 5;
}

.main-strip .m-metro {
    background-color: #4a84a3;
    color: white;
}

.main-strip .m-fad {
    grid-column: 2 / 4;
}

.main-strip .fader-box {
    margin-left: 6px;
}

.main-strip .fader {
    margin: 20px 2px 0 11px;
}

.main-strip .side {
    color: #a3a5a7;
}

.main-fx {
    flex: 1;
    background-color: #2f3237;
    display: flex;
    flex-direction: column;
}

.mixfx,
.fx-row {
    height: 25px;
    display: flex;
    align-items: center;
    padding: 0 5px;
}

.mixfx {
    background-color: #1c303d;
    border: solid #121416;
    border-width: 1px 0;
    padding-left: 23px;
}

.mixfx .ic-down {
    margin-left: auto;
}

.fx-row span {
    margin: 0 auto 0 4px;
}

.fx-row .ic-plus {
    margin-left: 6px;
}

.limiter {
    background-color: #55585c;
}

.limiter .ic-down {
    color: #6c6f73;
}

.fx-space {
    flex: 1;
}

.post {
    height: 100px;
    padding-bottom: 72px;
    border-top: 2px solid #16181a;
}

.main-name {
    height: 20px;
    line-height: 20px;
    text-align: center;
    border-top: 2px solid #26282b;
    background-color: #1b1c1e;
    color: #dcdedf;
}

.main-foot {
    height: 22px;
}

/* transport */
.transport {
    height: 55px;
    display: flex;
    background: linear-gradient(#5d6269, #585d64);
    border-top: 1px solid black;
}

.display {
    flex: 1;
    height: 52px;
    margin-left: 18px;
    margin-right: 12px;
    display: flex;
    align-items: center;
    background-color: #151617;
    clip-path: polygon(0 0, 100% 0, calc(100% - 15px) 100%, 12px 100%);
    color: #d3d5d6;
}

.stack {
    display: flex;
    flex-direction: column;
    align-items: center;
    gap: 4px;
    font-size: 16px;
    flex: none;
    padding-top: 2px;
}

.stack small {
    font-size: 13px;
    color: #8d9093;
}

.midi {
    margin-left: 70px;
    width: 36px;
}

.midi svg {
    width: 36px;
    height: 18px;
}

.perf {
    margin-left: 12px;
    width: 81px;
    align-items: flex-end;
}

.meters {
    width: 81px;
    height: 18px;
    display: flex;
    flex-direction: column;
    gap: 2px;
}

.meters i {
    height: 6px;
    background: linear-gradient(90deg, #2f3236 92%, #232527 92%);
}

.meters .cpu {
    background: linear-gradient(90deg, #56a8d4 6px, #2f3236 6px);
}

.ring {
    width: 30px;
    height: 30px;
    margin: 0 17px 0 21px;
}

.recmax {
    align-items: flex-start;
}

.clock {
    margin-left: 31px;
    width: 167px;
    gap: 4px;
    padding-top: 0;
}

.clock strong {
    font-size: 24px;
    line-height: 20px;
}

.clock button {
    font-size: 14px;
    color: #8d9093;
}

.clock svg {
    width: 9px;
    height: 7px;
}

.buttons {
    display: flex;
    align-items: center;
    margin-left: 24px;
    flex: none;
}

.buttons button {
    display: flex;
}

.buttons svg {
    width: 100%;
    height: 16px;
    fill: #bdbfc0;
}

.b-prev,
.b-next {
    width: 14px;
}

.b-rew,
.b-ff {
    width: 23px;
    margin-left: 14px;
}

.b-ff {
    margin-left: 18px;
}

.b-next {
    margin-left: 9px;
}

.b-zero {
    width: 16px;
    margin-left: 17px;
}

.buttons .b-stop {
    width: 26px;
    margin-left: 25px;
}

.b-play {
    width: 22px;
    margin-left: 22px;
}

.b-rec {
    width: 26px;
    margin-left: 18px;
}

.b-loop {
    width: 40px;
    margin-left: 19px;
}

.buttons .b-stop svg,
.buttons .b-play svg,
.buttons .b-rec svg,
.buttons .b-loop svg {
    height: 26px;
}

.locators {
    display: grid;
    grid-template-columns: 17px auto;
    row-gap: 2px;
    font-size: 16px;
    line-height: 18px;
    margin-left: 24px;
}

.locators b {
    color: #3d6f91;
    font-weight: normal;
}

.sync {
    margin-left: 34px;
    width: 30px;
}

.pre {
    margin-left: 20px;
}

.pre svg {
    width: 52px;
    height: 16px;
}

.metronome {
    margin-left: 15px;
    width: 70px;
    color: #7f8285;
}

.row3 {
    display: flex;
    gap: 12px;
    height: 16px;
    align-items: center;
}

.row3 svg {
    width: 14px;
    height: 13px;
}

.timing {
    width: 42px;
    margin-left: 22px;
}

.key {
    width: 24px;
    margin-left: 22px;
}

.tempo {
    width: 44px;
    margin-left: 25px;
}

.outs {
    margin-left: 24px;
    display: flex;
    flex-direction: column;
    gap: 1px;
}

.outs .dark {
    width: 84px;
    height: 5px;
    background-color: #2f3236;
}

.level {
    display: flex;
    gap: 8px;
    align-items: center;
    margin-top: 8px;
}

.level i {
    width: 84px;
    height: 11px;
    background: linear-gradient(90deg, transparent 62px, rgba(20, 22, 24, .75) 62px), repeating-linear-gradient(90deg, #55a9d3 0 2px, #1d3341 2px 3px);
}

.level svg {
    width: 22px;
    height: 13px;
    color: #4fb4dc;
}

.views {
    display: flex;
    font-size: 16px;
    color: #d9dbdc;
}

.views a {
    display: flex;
    align-items: center;
    justify-content: center;
    width: 70px;
    padding-top: 2px;
    border-left: 1px solid #43474c;
}

.views a:last-child {
    width: 83px;
}

.views .lit {
    background-color: #3793d5;
    color: white;
}

.edge {
    height: 7px;
    background: linear-gradient(#5a5e64, #26282b 5px, #c9cacb 6px);
}
```

FILE: script.js
```javascript
const ICON = (id, cls = '') => `<svg class="${cls}"><use href="#${id}"/></svg>`;

const channels = [
    { n: 1, name: 'Inst', input: 'Input L+R', out: 'Main', color: '#0560e0', body: '#203861', row: '#1f365a', pan: 'C', layout: 'layout-on' },
    { n: 2, name: 'Vox1', input: 'Input L', out: 'VoxBus1', color: '#009edc', body: '#1f4658', row: '#1f4757', pan: 'C' },
    { n: 3, name: 'Vox2', input: 'Input L', out: 'VoxBus1', color: '#009edc', body: '#1f4658', row: '#1f4757', pan: 'C' },
    { n: 4, name: 'Vox3', input: 'Input L', out: 'VoxBus2', color: '#00e388', body: '#1e5539', row: '#1d5139', pan: 'L' },
    { n: 5, name: 'Vox3 2', input: 'Input L', out: 'VoxBus2', color: '#00e388', body: '#249f6b', row: '#209663', pan: 'R', sel: true },
    { n: 6, name: 'VoxBus1', out: 'Main', color: '#009edc', body: '#1a3d52', pan: 'C', bus: true, layout: 'layout-on' },
    { n: 7, name: 'VoxBus2', out: 'Main', color: '#00e388', body: '#1a4833', pan: 'C', bus: true }
];

const smallScale = {
    h: 151, value: 94, light: 50,
    marks: [['10', 18], ['6', 30], ['0', 48], ['-6', 67], ['-12', 82], ['-24', 101], ['-36', 120], ['-48', 132], ['', 142]],
    ticks: [70, 85, 94, 102]
};
const bigScale = {
    h: 271, value: 83, light: 60,
    marks: [['10', 18], ['6', 41], ['0', 78], ['-6', 113], ['-12', 143], ['-24', 179], ['-36', 215], ['-48', 239], ['-72', 258]],
    ticks: [25, 89, 116, 148, 180, 200, 218]
};

function scaleSvg(s) {
    let out = `<rect x="20" y="15" width="16" height="${s.h - 15}" fill="#212427"/><rect x="20" y="0" width="16" height="15" fill="rgba(10,20,30,.35)"/>`;
    for (const [label, y] of s.marks) {
        out += `<rect x="22" y="${y}" width="12" height="1" fill="${label === '0' ? '#8b9093' : '#1d3a52'}"/>`;
        out += `<text x="18" y="${y + (label === '10' ? 6 : 4)}" text-anchor="end">${label}</text>`;
    }
    return `<svg class="scale" height="${s.h}">${out}</svg>`;
}

function faderHtml(s, bus, label) {
    const h = s.h - 20;
    const ticks = s.ticks.map(y => `<rect x="4" y="${y}" width="15" height="1" fill="rgba(255,255,255,.2)"/>`).join('');
    return `<div class="fader ${bus ? 'bus' : ''}">
        <svg width="23" height="${h}"><rect x="2" y="${s.light}" width="18" height="${h - s.light}" fill="rgba(200,215,225,.24)"/>${ticks}<rect x="10" y="0" width="3" height="${h - 21}" fill="#191c1f"/></svg>
        <input type="range" aria-label="${label} level" value="${s.value}"></div>`;
}

function stripBody(c, s, big) {
    const panValue = { L: 0, C: 50, R: 100 }[c.pan];
    const top = c.bus ? '<span class="dots"></span>' : `<button>${c.input}</button>`;
    const low = c.bus
        ? `<button aria-label="Stereo">${ICON('stereo', 'wide')}</button>`
        : `<button aria-label="Record">${ICON('rec')}</button><button aria-label="Monitor">${ICON('monitor')}</button>`;
    return `<div class="strip-body ${big ? 'big' : ''}" style="background-color:${big ? '#219465' : c.body}">
        <div class="routing">${top}<button class="${c.bus ? 'link' : ''}">${c.out}</button></div>
        <input type="range" class="pan ${c.pan.toLowerCase()}" aria-label="${c.name} pan" value="${panValue}">
        <div class="gain"><span>0dB</span><span>&lt;${c.pan}&gt;</span></div>
        <div class="ms"><button>M</button><button>S</button>${low}</div>
        <div class="fader-box">${scaleSvg(s)}${faderHtml(s, c.bus, c.name)}
            <div class="side">${ICON(c.layout || 'layout')}${big ? '' : ICON('pair', 'pairic')}${ICON('knob')}</div></div>
        <div class="foot"><b>${c.n}</b>${c.bus ? ICON('bus', 'ic-bus') : ICON('wave', 'ic-wave')}</div>
        <button class="auto">Auto: Off</button>
    </div>`;
}

function strip(c) {
    const dark = c.color === '#00e388' ? 'green-name' : '';
    return `<section class="strip ${c.sel ? 'sel' : ''}">
        <div class="cap" style="background-color:${c.color}"></div>
        ${stripBody(c, smallScale)}
        <div class="strip-name ${dark}" style="background-color:${c.color}">${c.name}</div>
    </section>`;
}

document.getElementById('strips').innerHTML =
    channels.slice(0, 3).map(strip).join('') +
    `<div class="marked">${channels.slice(3, 5).map(strip).join('')}</div>` +
    channels.slice(5).map(strip).join('');

document.getElementById('bigStrip').innerHTML = `<div class="strip sel">${stripBody(channels[4], bigScale, true)}</div>`;

// main output has its scale on the right
const mainMarks = [['6', 3], ['', 14], ['-3', 27], ['-9', 38], ['-24', 61], ['-36', 85], ['-48', 108], ['-60', 131]];
const mainLabels = [['6', 6], ['-3', 20], ['-9', 32], ['-24', 62], ['-36', 86], ['-48', 110], ['-60', 131]];
document.getElementById('mainStrip').innerHTML = `<div class="main-strip">
    <div class="routing"><span></span><button>Front L/R +</button></div>
    <div class="infs"><span>-∞</span><span>-∞</span></div>
    <div class="gain"><span>0dB</span><span>0</span></div>
    <div class="ms"><button class="m-m">M</button><button class="m-s">S</button>
        <button class="m-metro" aria-label="Metronome">${ICON('metro', 'wide')}</button>
        <button class="m-fad" aria-label="Level"><svg viewBox="0 0 12 12"><path d="M6 0v12" stroke="#a3a5a7" stroke-width="2"/><path d="M2 2h8v7H2z" fill="#a3a5a7"/><path d="M3 5.500h6" stroke="#333"/></svg></button>
        <button aria-label="Stereo">${ICON('stereo', 'wide')}</button></div>
    <div class="fader-box"><div class="side">${ICON('layout-on')}${ICON('pair-full', 'pairic')}${ICON('knob')}</div>
        ${faderHtml(smallScale, true, 'Main')}
        <svg class="scale" height="151"><g transform="translate(0 15)"><rect width="16" height="136" fill="#212427"/>
        ${mainMarks.map(([l, y]) => `<rect x="2" y="${y}" width="12" height="1" fill="${l ? '#1d3f59' : '#8b9093'}"/>`).join('')}
        ${mainLabels.map(([l, y]) => `<text x="35" y="${y + 4}" text-anchor="end">${l}</text>`).join('')}</g></svg>
    </div>
    <div class="foot"></div>
    <button class="auto">Auto: Off</button></div>`;

document.getElementById('channelRows').innerHTML = channels.map(c => `<tr class="${c.sel ? 'sel' : ''}">
    <td class="c-num">${c.n}</td><td class="c-meter"><i></i></td><td class="c-dot">${ICON('rec')}</td>
    <td class="c-type">${ICON(c.bus ? 'bus' : 'sine')}</td><td class="c-color"><i style="background-color:${c.color}"></i></td>
    <td class="c-name" colspan="2">${c.name}</td></tr>`).join('');
document.querySelector('.channel-list table').insertAdjacentHTML('afterbegin',
    '<colgroup>' + [47, 8, 20, 22, 7, 86, 57].map(w => `<col style="width:${w}px">`).join('') + '</colgroup>');

// the first track is scrolled half out of view, so its top line stays empty
const trackLine = c => c.n === 1 ? '' : `<div class="track-ms"><button>M</button><button>S</button><button aria-label="Record">${ICON('rec')}</button><button aria-label="Monitor">${ICON('monitor')}</button></div>${c.name}${ICON('wave', 'ic-wave')}`;

document.getElementById('tracks').innerHTML = channels.slice(0, 5).map(c => `
    <div class="track ${c.n === 1 ? 'cut' : ''} ${c.sel ? 'sel' : ''}">
        <div class="track-color" style="background-color:${c.color}"><svg viewBox="0 0 13 15"><path d="M2 10q2-8 4-2t5-3" fill="none" stroke="#9fc4d8"/></svg></div>
        <div class="track-body" style="background-color:${c.row}">
            <b class="track-num">${c.n === 1 ? '' : c.n}</b>
            <div class="track-main">
                <div class="track-line">${trackLine(c)}</div>
                <input type="range" class="track-vol" aria-label="${c.name} volume" value="75">
                <div class="track-in"><div class="pick"><select aria-label="${c.name} input"><option>${c.input}</option></select></div><button aria-label="Channel mode">${ICON(c.n === 1 ? 'stereo' : 'mono')}</button></div>
            </div>
        </div>
        <div class="track-meter"></div>
    </div>`).join('');

// time axis: bar 46 sits 48px in, one bar is 88.25px
const barX = bar => Math.round(47.5 + (bar - 46) * 88.25);
let rulerTicks = '', markerLines = '', gridLines = '', numbers = '';
for (let beat = 45.5; beat < 61.2; beat += 0.25) {
    const x = barX(beat);
    if (x < 0) continue;
    const major = Number.isInteger(beat);
    rulerTicks += `<rect x="${x}" y="${major ? 28 : 34}" width="${major ? 2 : 1}" height="12" fill="#d2d4d5"/>`;
    markerLines += `<rect x="${x}" width="1" height="34" fill="${major ? '#3b3d3f' : '#2e3032'}"/>`;
    gridLines += `<rect x="${x}" width="1" height="100%" fill="${major ? '#3b3d40' : '#2e3033'}"/>`;
    if (major && beat < 61) numbers += `<span style="left:${x + 1}px">${beat}</span>`;
}
document.getElementById('ruler').innerHTML = `<div class="loop"></div><svg>${rulerTicks}</svg>${numbers}`;
document.getElementById('grid').innerHTML = gridLines;
document.getElementById('markers').innerHTML = `<svg>${markerLines}</svg>
    <i class="pole" style="left:357px"></i><span class="flag four" style="left:357px">#4</span>
    <i class="pole blue" style="left:1051px"></i><span class="flag end" style="left:1012px">End</span>`;

// envelopes: [x, height above centre, height below centre]
const instWave = [[0, 20], [36, 20], [37, 17], [40, 17], [42, 20], [77, 20], [80, 11], [82, 16], [84, 12], [87, 20], [104, 20], [105, 17], [107, 20], [126, 20], [128, 16], [130, 20], [167, 20], [171, 10], [173, 20], [193, 20], [194, 18], [196, 20], [217, 20], [220, 10], [223, 20], [247, 20], [250, 17], [253, 20], [256, 20], [260, 15], [264, 20], [270, 15], [273, 20], [277, 20], [280, 12], [287, 14], [292, 8, 9], [300, 7], [306, 5, 6], [314, 4], [324, 4], [329, 0],
    [369, 0], [371, 20], [381, 20], [386, 5], [391, 2], [395, 2], [397, 6], [399, 2], [400, 0], [401, 20], [424, 20], [429, 4], [436, 3], [439, 0], [443, 0], [444, 20], [466, 20], [472, 6], [478, 2], [482, 4], [485, 0], [486, 0], [487, 20], [512, 20], [517, 6], [524, 3], [527, 0], [531, 0], [532, 20], [820, 20], [823, 7], [827, 0], [828, 0], [829, 20], [859, 20], [862, 6], [865, 0], [872, 0], [873, 20], [890, 20], [893, 9], [898, 0]];
const voxA = [[0, 26, 18], [8, 24, 18], [13, 20, 16], [17, 12, 11], [18, 4], [21, 6], [22, 22, 17], [24, 15, 11], [28, 13, 10], [33, 14, 11], [37, 10], [39, 0], [42, 0], [44, 10, 8], [50, 15, 11], [54, 0], [63, 0], [65, 17, 10], [68, 10], [74, 12, 9], [80, 10], [90, 8], [96, 7], [98, 10, 14], [105, 9, 12], [112, 13, 12], [116, 18, 13], [120, 14, 10], [125, 15, 11], [128, 7], [133, 10, 7], [138, 4], [139, 8, 6], [141, 0], [145, 0], [148, 5, 3], [153, 8, 7], [155, 5], [158, 14, 7], [159, 3], [161, 15, 16], [165, 12, 10], [170, 9], [178, 5, 7], [185, 6], [191, 9], [193, 0], [195, 4], [198, 11, 9], [210, 9], [220, 9], [232, 10, 8], [245, 9, 8], [258, 10, 8], [265, 7], [272, 4], [281, 0]];
const voxB = [[14, 0], [17, 12], [20, 4], [22, 1], [24, 3], [26, 1], [29, 5], [32, 4], [33, 1], [35, 5], [39, 0], [57, 0], [61, 7, 10], [64, 1], [66, 3], [69, 6, 4], [74, 4], [80, 5], [83, 0], [100, 0], [102, 10], [105, 8], [107, 3], [112, 4], [115, 6], [117, 3], [119, 8], [121, 12], [124, 8], [125, 0], [144, 0], [147, 8], [150, 4], [152, 1], [154, 4], [164, 6], [166, 10], [170, 6, 10], [173, 0], [188, 0], [192, 4], [197, 0], [199, 0], [202, 8], [204, 11], [207, 9], [209, 0], [210, 5], [214, 8, 10], [219, 5, 7], [223, 7], [226, 15, 12], [229, 14, 9], [231, 0], [233, 0], [235, 14, 16], [242, 11, 17], [249, 9, 16], [256, 10, 17], [263, 11, 17], [269, 13, 14], [272, 8, 9], [280, 6], [289, 4, 7], [299, 4], [306, 4, 6], [309, 0], [319, 0], [322, 4], [324, 19, 10], [326, 6], [327, 0], [331, 0], [332, 14, 12], [335, 11, 9], [339, 11, 8], [342, 8], [371, 7], [399, 7], [425, 6], [442, 8], [449, 7], [453, 0]];
const voxC = [[14, 0], [16, 12, 15], [20, 4], [24, 3], [28, 5], [30, 3], [33, 8, 5], [37, 0], [57, 0], [60, 7, 9], [62, 3], [64, 1], [66, 3], [70, 5], [74, 4], [77, 9, 6], [80, 6], [83, 0], [100, 0], [102, 10], [106, 6], [107, 2], [114, 5, 8], [117, 3], [119, 14, 13], [124, 9], [126, 0], [145, 0], [147, 7, 10], [150, 3], [152, 1], [155, 4], [162, 5], [165, 12, 9], [170, 7, 10], [172, 0], [189, 0], [191, 5], [195, 4], [198, 0], [200, 0], [205, 9], [208, 6], [209, 0], [210, 5], [214, 7, 10], [221, 7, 9], [223, 12, 8], [229, 14, 10], [231, 0], [233, 0], [236, 17, 23], [239, 20, 24], [242, 14, 20], [251, 10, 17], [258, 9, 16], [268, 10, 16], [270, 17, 18], [272, 7, 8], [289, 5, 6], [308, 4, 6], [311, 0], [312, 1], [317, 1], [318, 0], [320, 0], [323, 15, 12], [325, 5], [326, 0], [331, 0], [332, 11, 9], [337, 7], [348, 4, 6], [371, 5], [406, 4, 6], [455, 4], [458, 0]];

function wavePath(points, mid, maxDown) {
    const up = [], down = [];
    points.forEach(([x, u, d = u], i) => {
        up.push(`${x} ${mid - u}`);
        down.unshift(`${x} ${mid + Math.min(d, maxDown)}`);
        const next = points[i + 1];
        if (!next || u < 3 || u === 20 || next[1] < 3) return;
        // roughen long runs a little
        for (let px = x + 2; px < next[0] - 1; px += 2) {
            const t = (px - x) / (next[0] - x);
            const nd = next[2] === undefined ? next[1] : next[2];
            const r = Math.sin(px * 7.3) * 0.7;
            up.push(`${px} ${(mid - (u + (next[1] - u) * t) + r).toFixed(1)}`);
            down.unshift(`${px} ${(mid + d + (nd - d) * t + r).toFixed(1)}`);
        }
    });
    return `M${up.join('L')}L${down.join('L')}Z`;
}

function clip(left, width, bg, fill, wave, opt = {}) {
    const mid = opt.first ? 19 : 36;
    return `<div class="clip ${opt.cls || ''}" style="left:${left}px;width:${width}px;background-color:${bg}">
        <svg width="${width}"><path d="${wavePath(wave, mid, opt.first ? 18 : 36)}" fill="${fill}"/><rect y="${mid}" width="100%" height="1" fill="${opt.line || 'rgba(0,90,60,.45)'}"/>${opt.extra || ''}</svg></div>`;
}

const fxTab = '<path d="M0 57h20l8 17H0z" fill="#10804f"/><path d="M6 62.500h6M9 60v5M6 69.500h6M7 67v5" stroke="#c3e8d6"/><path d="M10 67l3 4M13 67l-3 4M12 60v5" stroke="#c3e8d6"/>';
const handles = '<rect x="232" y="0" width="11" height="9" fill="#c1d5d2"/><rect x="467" y="14" width="7" height="8" fill="#c1d5d2"/>';
const vox = 'rgba(120,170,190,.7)';
document.getElementById('lanes').innerHTML = `
    <div class="lane cut">${clip(0, 1051, '#0560e0', '#002659', instWave, { first: true, cls: 'first', line: 'rgba(10,60,140,.6)' })}</div>
    <div class="lane">${clip(0, 304, '#009edc', '#003f57', voxA, { line: vox })}${clip(357, 480, '#009edc', '#003f57', voxB, { line: vox })}</div>
    <div class="lane"></div>
    <div class="lane tint">${clip(357, 477, '#00e388', '#005f3a', voxC, { extra: fxTab })}</div>
    <div class="lane lit">${clip(357, 477, '#18d98d', '#14191d', voxC, { cls: 'picked', extra: fxTab + handles })}</div>`;
```
